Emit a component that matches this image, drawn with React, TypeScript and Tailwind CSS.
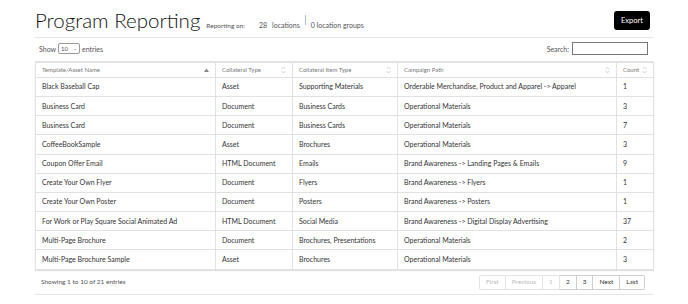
import React from "react";

const rows = [
  ["Black Baseball Cap", "Asset", "Supporting Materials", "Orderable Merchandise, Product and Apparel -> Apparel", "1"],
  ["Business Card", "Document", "Business Cards", "Operational Materials", "3"],
  ["Business Card", "Document", "Business Cards", "Operational Materials", "7"],
  ["CoffeeBookSample", "Asset", "Brochures", "Operational Materials", "3"],
  ["Coupon Offer Email", "HTML Document", "Emails", "Brand Awareness -> Landing Pages & Emails", "9"],
  ["Create Your Own Flyer", "Document", "Flyers", "Brand Awareness -> Flyers", "1"],
  ["Create Your Own Poster", "Document", "Posters", "Brand Awareness -> Posters", "1"],
  ["For Work or Play Square Social Animated Ad", "HTML Document", "Social Media", "Brand Awareness -> Digital Display Advertising", "37"],
  ["Multi-Page Brochure", "Document", "Brochures, Presentations", "Operational Materials", "2"],
  ["Multi-Page Brochure Sample", "Asset", "Brochures", "Operational Materials", "3"],
];

const columns = [
  { label: "Template/Asset Name", width: "w-[180px]", sort: "asc" },
  { label: "Collateral Type", width: "w-[77px]", sort: "both" },
  { label: "Collateral Item Type", width: "w-[105px]", sort: "both" },
  { label: "Campaign Path", width: "w-[219px]", sort: "both" },
  { label: "Count", width: "w-[37px]", sort: "both" },
];

const SortIcon = ({ kind }: { kind: string }) =>
  kind === "asc" ? (
    <svg width="5" height="4" viewBox="0 0 5 4" className="shrink-0">
      <path d="M0 4 L2.5 0.5 L5 4 Z" fill="#888" />
    </svg>
  ) : (
    <svg width="5" height="8" viewBox="0 0 5 8" className="shrink-0">
      <path d="M0.7 3.2 L2.5 1 L4.3 3.2 M0.7 4.8 L2.5 7 L4.3 4.8" fill="none" stroke="#b5b5b5" strokeWidth="0.6" />
    </svg>
  );

export default function App() {
  return (
    <div className="min-h-[304px] bg-white text-[#333]" style={{ fontFamily: "Lato, 'Open Sans', sans-serif" }}>
      <div className="mx-[35px] pt-[10px]">
        {/* Heading */}
        <div className="flex items-end justify-between border-b border-[#e6e6e6] pb-[6px]">
          <div className="flex items-baseline">
            <h1 className="text-[20.5px] leading-none font-light text-[#111]">Program Reporting</h1>
            <span className="ml-[6px] text-[6.5px] text-[#555]">Reporting on:</span>
            <span className="ml-[14px] text-[7px] text-[#555]">28</span>
            <span className="ml-[5px] text-[7px] text-[#555]">locations</span>
            <span className="mx-[5px] h-[10px] w-px self-center bg-[#a8c4e6]" />
            <span className="text-[7px] text-[#555]">0 location groups</span>
          </div>
          <button className="mr-[3px] mb-[1px] h-[19px] w-[36px] rounded-[3px] bg-black text-[7.5px] text-white">Export</button>
        </div>

        {/* Controls */}
        <div className="mt-[4px] flex h-[14px] items-center justify-between pl-[4px] text-[7px] text-[#555]">
          <div className="flex items-center">
            <span>Show</span>
            <span className="mx-[2px] flex h-[11px] w-[22px] items-center justify-between rounded-[2px] border border-[#999] px-[2px] text-[6px]">
              <span>10</span>
              <span className="text-[5px] text-[#666]">⌄</span>
            </span>
            <span>entries</span>
          </div>
          <div className="mr-[5px] flex items-center">
            <span className="mr-[3px]">Search:</span>
            <input className="h-[13px] w-[76px] border border-[#777] bg-white outline-none" />
          </div>
        </div>

        {/* Table */}
        <table className="mt-[5px] w-[618px] table-fixed border-collapse shadow-[0_1px_1px_rgba(0,0,0,0.12)]">
          <thead>
            <tr className="h-[15.5px]">
              {columns.map((c) => (
                <th key={c.label} className={`${c.width} border border-[#e2e2e2] border-t-2 px-[6px] text-left font-normal`}>
                  <div className="flex items-center justify-between text-[6px] text-[#777]">
                    <span>{c.label}</span>
                    <SortIcon kind={c.sort} />
                  </div>
                </th>
              ))}
            </tr>
          </thead>
          <tbody>
            {rows.map((r, i) => (
              <tr key={i} className="h-[19.2px]">
                {r.map((cell, j) => (
                  <td key={j} className="border border-[#e2e2e2] px-[6px] text-[7px] leading-none text-[#333] whitespace-nowrap">
                    {cell}
                  </td>
                ))}
              </tr>
            ))}
          </tbody>
        </table>

        {/* Footer */}
        <div className="mt-[5px] flex items-center justify-between border-b border-[#e6e6e6] pb-[4px] pl-[6px]">
          <span className="text-[6.5px] text-[#555]">Showing 1 to 10 of 21 entries</span>
          <div className="mr-[8px] flex h-[15px] text-[6.5px]">
            <span className="flex items-center rounded-l-[2px] border border-[#e4e4e4] px-[6px] text-[#bbb]">First</span>
            <span className="flex items-center border border-l-0 border-[#e4e4e4] px-[6px] text-[#bbb]">Previous</span>
            <span className="flex items-center border border-l-0 border-[#e4e4e4] px-[6px] text-[#bbb]">1</span>
            <span className="flex items-center border border-l-0 border-[#cfcfcf] px-[6px] text-[#333]">2</span>
            <span className="flex items-center border border-l-0 border-[#cfcfcf] px-[6px] text-[#333]">3</span>
            <span className="flex items-center border border-l-0 border-[#cfcfcf] px-[6px] text-[#333]">Next</span>
            <span className="flex items-center rounded-r-[2px] border border-l-0 border-[#cfcfcf] px-[6px] text-[#333]">Last</span>
          </div>
        </div>
      </div>
    </div>
  );
}
